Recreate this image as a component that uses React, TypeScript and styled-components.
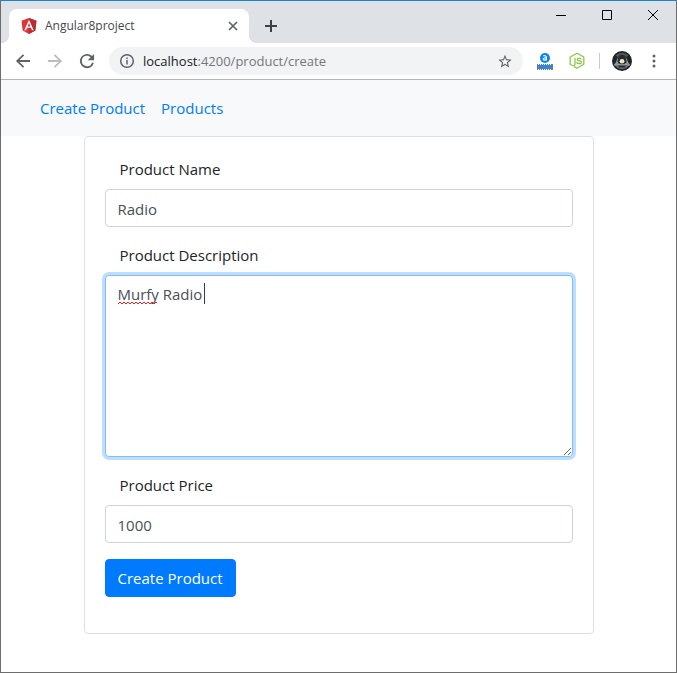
import React from "react";
import styled, { createGlobalStyle } from "styled-components";

const GlobalStyle = createGlobalStyle`
  *, *::before, *::after { box-sizing: border-box; }
  body {
    margin: 0;
    background: #fff;
    color: #212529;
    font-family: "Open Sans", "Noto Sans", sans-serif;
    font-size: 15px;
    line-height: 24px;
  }
`;

const BrowserWindow = styled.div`
  display: flex;
  flex-direction: column;
  min-height: 100vh;
  background: #fff;
  border: 1px solid #6d6d6d;
  border-top-color: #1883d7;
`;

const TabStrip = styled.header`
  display: flex;
  align-items: flex-start;
  height: 42px;
  padding-left: 8px;
  background: #dee1e6;
`;

const Tab = styled.div`
  position: relative;
  display: flex;
  align-items: center;
  gap: 8px;
  width: 240px;
  height: 34px;
  margin-top: 8px;
  padding: 0 8px 0 12px;
  background: #fff;
  border-radius: 8px 8px 0 0;

  &::before,
  &::after {
    content: "";
    position: absolute;
    bottom: 0;
    width: 8px;
    height: 8px;
  }
  &::before {
    right: 100%;
    background: radial-gradient(circle at 0 0, transparent 8px, #fff 8px);
  }
  &::after {
    left: 100%;
    background: radial-gradient(circle at 100% 0, transparent 8px, #fff 8px);
  }
`;

const TabTitle = styled.span`
  flex: 1;
  font-size: 12px;
  line-height: 16px;
  color: #45494d;
`;

const IconButton = styled.button<{ $size?: number; $color?: string }>`
  display: flex;
  align-items: center;
  justify-content: center;
  flex: none;
  width: ${(p) => p.$size ?? 16}px;
  height: ${(p) => p.$size ?? 16}px;
  padding: 0;
  border: 0;
  background: none;
  color: ${(p) => p.$color ?? "#5f6368"};
`;

const NewTab = styled(IconButton)`
  margin: 11px 0 0 8px;
`;

const WindowControls = styled.div`
  display: flex;
  margin-left: auto;
`;

const WindowButton = styled(IconButton)`
  width: 46px;
  height: 28px;
  color: #000;
`;

const Toolbar = styled.div`
  display: flex;
  align-items: center;
  height: 37px;
  padding: 0 12px;
  border-bottom: 1px solid #b4b4b4;
`;

const HistoryButtons = styled.div`
  display: flex;
  gap: 12px;
  margin-right: 12px;
`;

const AddressBar = styled.div`
  display: flex;
  align-items: center;
  flex: 1;
  min-width: 0;
  height: 28px;
  padding: 0 10px;
  border-radius: 14px;
  background: #f1f3f4;
`;

const Address = styled.div`
  flex: 1;
  margin-left: 8px;
  font-size: 13px;
  line-height: 20px;
  white-space: nowrap;
  overflow: hidden;
  color: #74787c;
`;

const Host = styled.span`
  color: #202124;
`;

const Extensions = styled.div`
  display: flex;
  align-items: center;
  margin-left: 12px;
  gap: 12px;
`;

const Divider = styled.span`
  width: 1px;
  height: 16px;
  background: #c8cacd;
`;

const Navbar = styled.nav`
  padding: 8px 31px;
  background: #f8f9fa;
`;

const NavList = styled.ul`
  display: flex;
  margin: 0;
  padding: 0;
  list-style: none;
`;

const NavLink = styled.a`
  display: block;
  padding: 8px;
  color: #007bff;
  text-decoration: none;
`;

const Container = styled.main`
  width: 100%;
  max-width: 540px;
  margin: 0 auto;
  padding: 0 15px;
`;

const Card = styled.section`
  padding: 20px;
  border: 1px solid #dfdfdf;
  border-radius: 4px;
`;

const FormGroup = styled.div`
  margin-bottom: 16px;
`;

const Label = styled.label`
  display: block;
  margin-bottom: 8px;
  padding: 0 15px;
`;

const Input = styled.input`
  display: block;
  width: 100%;
  height: 38px;
  padding: 7px 12px 5px;
  border: 1px solid #ced4da;
  border-radius: 4px;
  outline: 0;
  background: #fff;
  color: #495057;
  font: inherit;
`;

const TextAreaFrame = styled.div`
  position: relative;
`;

const TextArea = styled.textarea`
  display: block;
  width: 100%;
  padding: 6px 12px;
  border: 1px solid #80bdff;
  border-radius: 4px;
  outline: 0;
  box-shadow: 0 0 0 3px #bfdeff;
  background: #fff;
  color: #495057;
  caret-color: transparent;
  font: inherit;
  resize: vertical;
`;

const SpellingMark = styled.svg`
  position: absolute;
  left: 13px;
  top: 26px;
  pointer-events: none;
`;

const Caret = styled.span`
  position: absolute;
  left: 99px;
  top: 8px;
  width: 1px;
  height: 21px;
  background: #343a40;
  pointer-events: none;
`;

const SubmitButton = styled.button`
  display: block;
  height: 38px;
  padding: 6px 12px;
  border: 1px solid #007bff;
  border-radius: 4px;
  background: #007bff;
  color: #fff;
  font: inherit;
`;

const AngularLogo = () => (
  <svg width="16" height="16" viewBox="0 0 250 250" aria-hidden="true">
    <path fill="#e23237" d="M125 0 8 42l18 153 99 55 99-55 18-153z" />
    <path fill="#b52e31" d="M125 0v250l99-55 18-153z" />
    <path fill="#fff" d="m125 28-73 162h27l15-37h62l15 37h27zm21 103h-42l21-51z" />
  </svg>
);

const CloseIcon = () => (
  <svg width="10" height="10" viewBox="0 0 10 10" fill="none" stroke="currentColor" strokeWidth="1.7">
    <path d="m1 1 8 8M9 1 1 9" />
  </svg>
);

const PlusIcon = () => (
  <svg width="12" height="12" viewBox="0 0 12 12" fill="currentColor">
    <path d="M5 0h2v5h5v2H7v5H5V7H0V5h5z" />
  </svg>
);

const BackIcon = () => (
  <svg width="20" height="20" viewBox="0 0 24 24" fill="currentColor">
    <path d="M20.5 10.9H7.8l5.6-5.5L12 3.9 3.5 12l8.5 8.1 1.4-1.5-5.6-5.5h12.7z" />
  </svg>
);

const ForwardIcon = () => (
  <svg width="20" height="20" viewBox="0 0 24 24" fill="currentColor">
    <path d="M3.5 10.9h12.7l-5.6-5.5L12 3.9l8.5 8.1-8.5 8.1-1.4-1.5 5.6-5.5H3.5z" />
  </svg>
);

const ReloadIcon = () => (
  <svg width="20" height="20" viewBox="0 0 24 24" fill="currentColor">
    <path d="M18 6a8.5 8.5 0 1 0 2.3 8h-2.4A6.2 6.2 0 1 1 12 5.8c1.7 0 3.2.7 4.3 1.8L12.9 11h7.6V3.5z" />
  </svg>
);

const InfoIcon = () => (
  <svg width="16" height="16" viewBox="0 0 16 16" fill="none" stroke="currentColor" strokeWidth="1.5">
    <circle cx="8" cy="8" r="6.3" />
    <path d="M8 7v4.5M8 4.4V6" />
  </svg>
);

const StarIcon = () => (
  <svg width="17" height="17" viewBox="0 0 24 24" fill="currentColor">
    <path d="m22 9.24-7.19-.62L12 2 9.19 8.63 2 9.24l5.46 4.73L5.82 21 12 17.27 18.18 21l-1.63-7.03zM12 15.4l-3.76 2.27 1-4.28-3.32-2.88 4.38-.38L12 6.1l1.71 4.04 4.38.38-3.32 2.88 1 4.28z" />
  </svg>
);

const RulerExtensionIcon = () => (
  <svg width="16" height="17" viewBox="0 0 16 17">
    <circle cx="8" cy="5" r="5" fill="#0a84f4" />
    <path d="M6.3 3.1c1-.7 3.1-.6 3.1.9v3.5M9.4 4.9c-1.6-.2-3.2 0-3.2 1.2 0 1.4 2.4 1.3 3.2.1" fill="none" stroke="#fff" strokeWidth="1.2" />
    <path d="M0 12h16v4H0z" fill="#3183e0" />
    <path d="M0 11.5h16M0 16.5h16" stroke="#727985" strokeDasharray="1 1" />
    <path d="M.5 11v6M15.5 11v6" stroke="#727985" />
  </svg>
);

const NodeIcon = () => (
  <svg width="16" height="18" viewBox="0 0 16 18" fill="none" stroke="#8cc84b" strokeWidth="1.3">
    <path d="M5.3 14.6 8 16.3l6.8-4V5L8 1.2 1.2 5v7.3l2 1.2c1.5.7 2.8.2 2.8-1.4V5.8" strokeLinejoin="round" />
    <path d="M12.2 7.4c-.3-1-1-1.2-2-1.2-1.3 0-2 .5-2 1.3 0 2 4.2.5 4.2 2.7 0 1-.9 1.5-2.2 1.5-1.5 0-2.3-.5-2.4-1.6" />
  </svg>
);

const Avatar = () => (
  <svg width="20" height="20" viewBox="0 0 20 20">
    <circle cx="10" cy="10" r="10" fill="#202426" />
    <path d="M3.5 4.5a9 9 0 0 1 13 0l-2 1.5a6 6 0 0 0-9 0z" fill="#4c565b" />
    <path d="M1.5 14c1.5-1 3-3 3.5-6 1-4 9-4 10 0 .5 3 2 5 3.5 6l-3 1.5h-11z" fill="#8d979c" />
    <path d="M6 7c1-3 7-3 8 0l.5 4c-1 3-8 3-9 0z" fill="#272b2d" />
    <ellipse cx="10" cy="10.3" rx="2.4" ry="2.2" fill="#eee3cd" />
    <path d="M3.5 14c4 1.5 9 1.5 13 0l-2 3c-3 1.5-6 1.5-9 0z" fill="#626b70" />
    <path d="M6 14.5h8l-1.5 2h-5z" fill="#24282a" />
  </svg>
);

const MenuIcon = () => (
  <svg width="4" height="14" viewBox="0 0 4 14" fill="currentColor">
    <circle cx="2" cy="2" r="1.5" />
    <circle cx="2" cy="7" r="1.5" />
    <circle cx="2" cy="12" r="1.5" />
  </svg>
);

const MinimizeIcon = () => (
  <svg width="10" height="11" viewBox="0 0 10 11" stroke="currentColor">
    <path d="M0 5.5h10" />
  </svg>
);

const MaximizeIcon = () => (
  <svg width="10" height="10" viewBox="0 0 10 10" fill="none" stroke="currentColor">
    <path d="M.5.5h9v9h-9z" />
  </svg>
);

const CloseWindowIcon = () => (
  <svg width="10" height="10" viewBox="0 0 10 10" stroke="currentColor">
    <path d="m0 0 10 10M10 0 0 10" />
  </svg>
);

export default function App() {
  return (
    <>
      <GlobalStyle />
      <BrowserWindow>
        <TabStrip>
          <Tab>
            <AngularLogo />
            <TabTitle>Angular8project</TabTitle>
            <IconButton aria-label="Close tab"><CloseIcon /></IconButton>
          </Tab>
          <NewTab $size={28} $color="#3c4043" aria-label="New tab"><PlusIcon /></NewTab>
          <WindowControls>
            <WindowButton aria-label="Minimize"><MinimizeIcon /></WindowButton>
            <WindowButton aria-label="Maximize"><MaximizeIcon /></WindowButton>
            <WindowButton aria-label="Close window"><CloseWindowIcon /></WindowButton>
          </WindowControls>
        </TabStrip>
        <Toolbar>
          <HistoryButtons>
            <IconButton $size={20} aria-label="Back"><BackIcon /></IconButton>
            <IconButton $size={20} $color="#babcbe" aria-label="Forward"><ForwardIcon /></IconButton>
            <IconButton $size={20} aria-label="Reload"><ReloadIcon /></IconButton>
          </HistoryButtons>
          <AddressBar>
            <IconButton aria-label="Site information"><InfoIcon /></IconButton>
            <Address><Host>localhost</Host>:4200/product/create</Address>
            <IconButton aria-label="Bookmark"><StarIcon /></IconButton>
          </AddressBar>
          <Extensions>
            <IconButton $size={20} aria-label="Ruler extension"><RulerExtensionIcon /></IconButton>
            <IconButton $size={20} aria-label="Node extension"><NodeIcon /></IconButton>
            <Divider />
            <IconButton $size={20} aria-label="Profile"><Avatar /></IconButton>
            <IconButton $size={20} aria-label="Menu"><MenuIcon /></IconButton>
          </Extensions>
        </Toolbar>
        <Navbar>
          <NavList>
            <li><NavLink href="/product/create">Create Product</NavLink></li>
            <li><NavLink href="/products">Products</NavLink></li>
          </NavList>
        </Navbar>
        <Container>
          <Card>
            <form onSubmit={(e) => e.preventDefault()}>
              <FormGroup>
                <Label htmlFor="name">Product Name</Label>
                <Input id="name" type="text" defaultValue="Radio" />
              </FormGroup>
              <FormGroup>
                <Label htmlFor="description">Product Description</Label>
                <TextAreaFrame>
                  <TextArea id="description" rows={7} defaultValue="Murfy Radio" spellCheck={false} />
                  <SpellingMark width="41" height="4" viewBox="0 0 41 4" fill="none" stroke="#f02020" aria-hidden="true">
                    <path d="M0 3l2-2 2 2 2-2 2 2 2-2 2 2 2-2 2 2 2-2 2 2 2-2 2 2 2-2 2 2 2-2 2 2 2-2 2 2 2-2 1 1" />
                  </SpellingMark>
                  <Caret />
                </TextAreaFrame>
              </FormGroup>
              <FormGroup>
                <Label htmlFor="price">Product Price</Label>
                <Input id="price" type="text" defaultValue="1000" />
              </FormGroup>
              <FormGroup>
                <SubmitButton type="submit">Create Product</SubmitButton>
              </FormGroup>
            </form>
          </Card>
        </Container>
      </BrowserWindow>
    </>
  );
}
